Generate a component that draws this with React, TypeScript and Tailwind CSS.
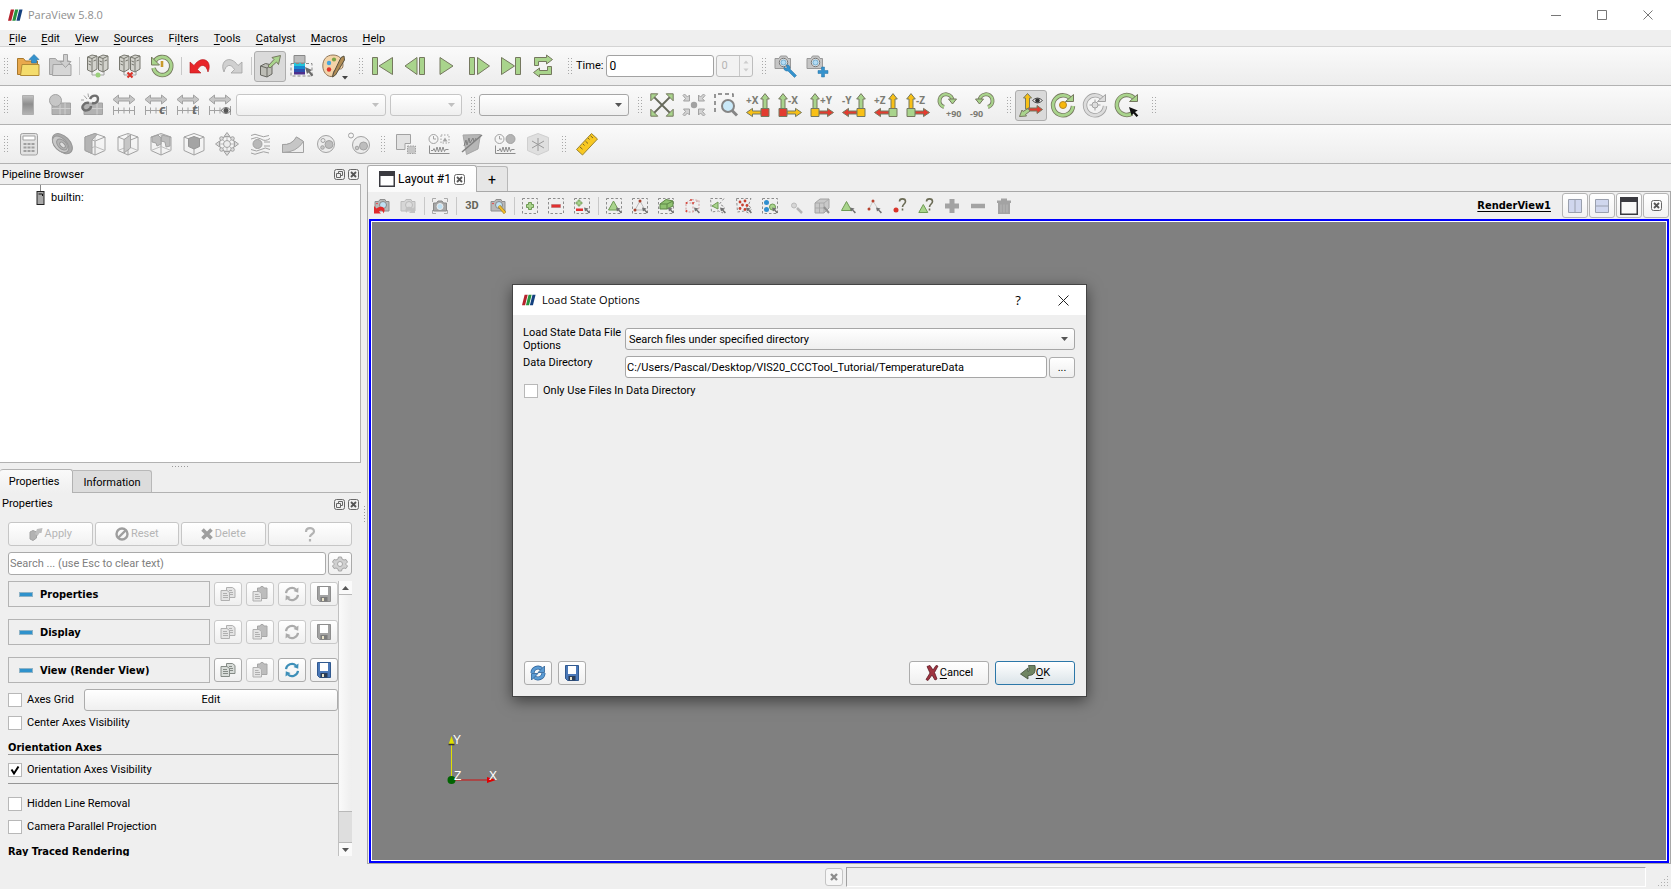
import type { ReactNode } from "react";

const G = "#a9d48c";
const D = "#75785f";
const L = "#c6c6c6";
const M = "#a2a2a2";

type P = { children?: ReactNode };

function Icon({ children }: P) {
  return (
    <svg viewBox="0 0 24 24" className="size-6 shrink-0 overflow-visible" fill="none" strokeLinejoin="round">
      {children}
    </svg>
  );
}

function Small({ children }: P) {
  return (
    <svg viewBox="0 0 16 16" className="size-4 shrink-0" fill="none" strokeLinejoin="round">
      {children}
    </svg>
  );
}

function Grip() {
  const rows = [0, 1, 2, 3, 4, 5];
  return (
    <svg viewBox="0 0 5 17" className="ml-1 mr-[3px] h-[17px] w-[5px] shrink-0" fill="#a8a8a8">
      {rows.map((r) => (
        <g key={r}>
          <rect x="0" y={r * 3} width="1" height="1" />
          <rect x="3" y={r * 3} width="1" height="1" />
        </g>
      ))}
    </svg>
  );
}

function Sep() {
  return (
    <div className="flex w-1.5 shrink-0 justify-center">
      <div className="h-[18px] w-px bg-[#c8c8c8]" />
    </div>
  );
}

function Tool({ label, on, wide, children }: P & { label: string; on?: boolean; wide?: boolean }) {
  return (
    <button
      aria-label={label}
      className={`flex h-[31px] shrink-0 items-center justify-center rounded-[3px] ${wide ? "w-[33px]" : "w-8"} ${
        on ? "border border-[#adadad] bg-[#dadada]" : ""
      }`}
    >
      <Icon>{children}</Icon>
    </button>
  );
}

function ViewTool({ label, children }: P & { label: string }) {
  return (
    <button aria-label={label} className="flex h-6 w-[26px] shrink-0 items-center justify-center">
      <Small>{children}</Small>
    </button>
  );
}

function Bar({ children }: P) {
  return (
    <div className="flex h-[39px] shrink-0 items-center overflow-hidden border-b border-[#b2b2b2] bg-linear-to-b from-[#fafafa] to-[#ededed]">
      {children}
    </div>
  );
}

function Combo({ label, className, disabled, options = [""] }: { label: string; className: string; disabled?: boolean; options?: string[] }) {
  return (
    <div className={`relative h-[22px] ${className}`}>
      <select
        aria-label={label}
        disabled={disabled}
        className={`size-full appearance-none rounded-[3px] border bg-linear-to-b from-white to-[#efefef] pl-[3px] text-[11px] text-black ${
          disabled ? "border-[#c6c6c6]" : "border-[#a6a6a6]"
        }`}
      >
        {options.map((o) => (
          <option key={o}>{o}</option>
        ))}
      </select>
      <svg viewBox="0 0 7 4" className="pointer-events-none absolute right-[7px] top-[9px] h-1 w-[7px]" fill={disabled ? "#c0c0c0" : "#555"}>
        <path d="M0 0h7L3.500 4z" />
      </svg>
    </div>
  );
}

function Check({ label, checked }: { label: string; checked?: boolean }) {
  return (
    <label className="flex items-center gap-[5px]">
      <span className="relative grid size-3.5 shrink-0">
        <input type="checkbox" defaultChecked={checked} className="peer size-3.5 appearance-none border border-[#b8b8b8] bg-white" />
        <svg viewBox="0 0 14 14" className="pointer-events-none absolute inset-0 hidden size-3.5 peer-checked:block" fill="none" stroke="#000" strokeWidth="2">
          <path d="M3.500 6.500 6 10.500 10.500 3.500" />
        </svg>
      </span>
      <span className="whitespace-nowrap">{label}</span>
    </label>
  );
}

function Logo({ className }: { className: string }) {
  return (
    <svg viewBox="0 0 16 12" className={className}>
      <path d="M3 0h3.500L3.500 12H0z" fill="#b5222c" />
      <path d="M7.500 0H11L8 12H4.500z" fill="#27933f" />
      <path d="M12 0h3.500l-3 12H9z" fill="#14417f" />
    </svg>
  );
}

function Axis({ text, right, up, side, box }: { text: string; right?: boolean; up: string; side: string; box: string }) {
  return (
    <>
      <g transform={right ? "translate(24 0) scale(-1 1)" : undefined} stroke={D} strokeWidth="1">
        <path d="M3 15.500V6H.7L5 .6 9.300 6H7v9.500z" fill={up} />
        <path d="M9 18h8.500v-2.600l6 4.100-6 4.100V21H9z" fill={side} />
        <rect x="1" y="15.500" width="8" height="8" fill={box} />
      </g>
      <text x={right ? 0 : 10} y="11" fontSize="10" fontWeight="700" fill="#7c7c74" fontFamily="Noto Sans, sans-serif">
        {text}
      </text>
    </>
  );
}

function Cube({ variant }: { variant: "clip" | "slice" | "thresh" | "extract" }) {
  return (
    <>
      <path d="M2 5 12 1.500 22 5v13.500L12 23 2 18.500zM2 5l10 4 10-4M12 9v14" stroke={M} />
      {variant !== "extract" && <path d="M2 18.500l10-4 10 4M12 1.500v13" stroke="#bdbdbd" />}
      {variant === "clip" && <path d="M2 5 12 1.500l2 1L9 8v13.500L2 18.500z" fill="#b4b4b4" stroke={M} />}
      {variant === "slice" && <path d="M8 7.500 14.500 3v13L8 21z" fill={L} stroke={M} />}
      {variant === "thresh" && <path d="M3 5l6-2 3 3v6l-4 2-1-3-4-1zM13 3l8 2v9l-4 1-1-5-4-1z" fill="#bcbcbc" stroke={M} />}
      {variant === "extract" && <path d="M6.500 6.500 12 4.500l5.500 2v8L12 17l-5.500-2.500z" fill="#a4a4a4" stroke="#959595" />}
    </>
  );
}

function Range({ children }: P) {
  return (
    <>
      <path d="M1 6.500 6.500 2v3h11V2L23 6.500 17.500 11V8h-11v3z" fill={L} stroke={M} />
      <path d="M1.500 13v9M22.500 13v9M1.500 17.500h21M6.500 14.500v6M12 14.500v6M17.500 14.500v6" stroke={M} />
      {children}
    </>
  );
}

function Servers() {
  return (
    <>
      <path d="M6 17v4h4M18 17v4h-4" stroke={M} />
      <path d="M1.500 3 6 1l5 1v13l-5 3-4.500-2z" fill="#d2d2cc" stroke="#77776f" />
      <path d="M6 4.500V18M1.500 3 6 4.500 11 2M2.500 7l2.500 1M2.500 10l2.500 1M7.500 7l2.500-1" stroke="#77776f" />
      <path d="M12.500 3 17 1l5 1v13l-5 3-4.500-2z" fill="#d2d2cc" stroke="#77776f" />
      <path d="M17 4.500V18M12.500 3 17 4.500 22 2M13.500 7l2.500 1M13.500 10l2.500 1M18.500 7l2.500-1" stroke="#77776f" />
    </>
  );
}

function Camera() {
  return (
    <>
      <path d="M1 4.500h4l1.500-2.500h6L14 4.500h2.500v10H1z" fill="#c5c5c5" stroke="#999" />
      <circle cx="9.500" cy="8.500" r="4.200" fill="#eee" stroke="#777" />
      <circle cx="9.500" cy="8.500" r="2.600" fill="#b4dcf4" stroke="#6fa9cc" />
    </>
  );
}

function SmallCamera({ dim }: { dim?: boolean }) {
  return (
    <>
      <path d="M1 3.500h3.500L6 1.500h5l1 2h3v9.500H1z" fill={dim ? "#d6d6d6" : "#b9b9b9"} stroke={dim ? "#bbb" : "#8e8e8e"} />
      <circle cx="9" cy="7" r="3.500" fill={dim ? "#ddd" : "#bfe0f3"} stroke={dim ? "#bbb" : "#888"} />
      {!dim && <circle cx="3" cy="5.500" r=".8" fill="#e33" />}
    </>
  );
}

function Dash() {
  return <path d="M.5.5h15v15H.5z" stroke="#8d8d8d" strokeDasharray="2.500 2" />;
}

function Pointer() {
  return <path d="m10 9.500 1 4 1.200-1 2.600 3 1.200-1.200-2.800-2.600 1.300-1.200z" fill="#707070" />;
}

function Disk({ tone }: { tone: "blue" | "grey" }) {
  const b = tone === "blue";
  return (
    <Small>
      <path d="M1.500.500h13v15h-11l-2-2z" fill={b ? "#4a78b8" : "#a3a3a3"} stroke={b ? "#31598f" : "#8e8e8e"} />
      <rect x="4" y="1" width="8" height="8" fill="#fff" />
      <rect x="4.500" y="11" width="7" height="4.500" fill={b ? "#2b3d57" : "#7c7c7c"} />
      <rect x="6" y="12" width="2" height="3" fill="#e8e2c8" />
    </Small>
  );
}

function Cycle({ color }: { color: string }) {
  return (
    <Small>
      <path d="M2 7.200A6 6 0 0 1 12 3.500M14 8.800A6 6 0 0 1 4 12.500" stroke={color} strokeWidth="2.200" />
      <path d="m14.500 1.500-.3 5.200-4.700-1.700zM1.500 14.500l.3-5.200 4.700 1.700z" fill={color} />
    </Small>
  );
}

function Restore() {
  return (
    <Small>
      <path d="M2.500 8A5.500 5.500 0 0 1 11.500 3.800M13.500 8A5.500 5.500 0 0 1 4.500 12.200" stroke="#2c5f96" strokeWidth="4" />
      <path d="M2.500 8A5.500 5.500 0 0 1 11.500 3.800M13.500 8A5.500 5.500 0 0 1 4.500 12.200" stroke="#5b9bd3" strokeWidth="2.600" />
      <path d="M14.500 1v6.500H8zM1.500 15V8.500H8z" fill="#5b9bd3" stroke="#2c5f96" strokeWidth=".8" />
    </Small>
  );
}

function CopyIcon({ dark }: { dark?: boolean }) {
  return (
    <Small>
      <g fill={dark ? "#d8dcd9" : "#e4e4e4"} stroke={dark ? "#858b86" : "#b0b0b0"}>
        <path d="M6.500 1.500h6l2.500 2v8H6.500z" />
        <path d="M9 4.500h3M9 6.500h4M9 8.500h4" />
        <path d="M1 4.500h6l2.500 2v8H1z" />
        <path d="M3 7.500h4M3 9.500h5M3 11.500h5" />
      </g>
    </Small>
  );
}

function PasteIcon() {
  return (
    <Small>
      <path d="M5.500 2h2.500l1-1.500h2L12 2h3v10.500H5.500z" fill="#bdbdbd" stroke="#a6a6a6" />
      <path d="M1 5.500h6l2.500 2V15H1z" fill="#e4e4e4" stroke="#b0b0b0" />
      <path d="M3 8.500h3.500M3 10.500h5M3 12.500h5" stroke="#b0b0b0" />
    </Small>
  );
}

function IconButton({ label, dim, children }: P & { label: string; dim?: boolean }) {
  return (
    <button
      aria-label={label}
      className={`flex h-6 w-7 shrink-0 items-center justify-center rounded-[3px] border bg-linear-to-b from-white to-[#efefef] ${
        dim ? "border-[#c9c9c9]" : "border-[#acacac]"
      }`}
    >
      {children}
    </button>
  );
}

function Section({ title, active }: { title: string; active?: boolean }) {
  return (
    <div className="mb-3 flex items-center gap-1">
      <button className="flex h-[26px] flex-1 items-center gap-[7px] border border-[#b4b4b4] pl-2.5 pt-px font-['DejaVu_Sans_Condensed','DejaVu_Sans',sans-serif] font-bold">
        <span className="h-[5px] w-3.5 border border-[#8fb3c6] bg-[#2f92cc]" />
        {title}
      </button>
      <IconButton label={`Copy ${title}`} dim={!active}><CopyIcon dark={active} /></IconButton>
      <IconButton label={`Paste ${title}`} dim><PasteIcon /></IconButton>
      <IconButton label={`Reset ${title}`} dim={!active}><Cycle color={active ? "#3d8fb8" : "#ababab"} /></IconButton>
      <IconButton label={`Save ${title}`} dim={!active}><Disk tone={active ? "blue" : "grey"} /></IconButton>
    </div>
  );
}

function DockTitle({ title }: { title: string }) {
  return (
    <div className="flex items-center justify-between pl-0.5 pr-0.5">
      <h2>{title}</h2>
      <div className="flex gap-[3px]">
        <button aria-label={`Float ${title}`}>
          <svg viewBox="0 0 11 11" className="size-[11px]" fill="none" stroke="#666">
            <rect x=".5" y=".5" width="10" height="10" rx="2" />
            <path d="M4.500 4V2.500h4v4H7M2.500 4.500h4v4h-4z" />
          </svg>
        </button>
        <button aria-label={`Close ${title}`}><CloseBox /></button>
      </div>
    </div>
  );
}

function CloseBox() {
  return (
    <svg viewBox="0 0 11 11" className="size-[11px]" fill="none" stroke="#666">
      <rect x=".5" y=".5" width="10" height="10" rx="2" />
      <path d="m3 3 5 5m0-5L3 8" stroke="#555" strokeWidth="1.800" />
    </svg>
  );
}

function WindowGlyph() {
  return (
    <svg viewBox="0 0 16 16" className="size-4">
      <path d="M0 0h16v16H0z" fill="#3a3a40" />
      <path d="M1.500 5h13v9.500h-13z" fill="#fff" />
    </svg>
  );
}

function ActionButton({ text, children }: P & { text?: string }) {
  return (
    <button
      disabled
      aria-label={text ?? "Help"}
      className="flex h-6 flex-1 items-center justify-center gap-0.5 rounded-[3px] border border-[#c6c6c6] bg-linear-to-b from-white to-[#f1f1f1] text-[#b5b5b5]"
    >
      {children}
      {text}
    </button>
  );
}

const menus: [string, string, string][] = [
  ["", "F", "ile"],
  ["", "E", "dit"],
  ["", "V", "iew"],
  ["", "S", "ources"],
  ["Fi", "l", "ters"],
  ["", "T", "ools"],
  ["", "C", "atalyst"],
  ["", "M", "acros"],
  ["", "H", "elp"],
];

function MainToolbars() {
  return (
    <>
      <Bar>
        <Grip />
        <Tool label="Open">
          <path d="M1.500 20.500V4.500h6l2 2.500h12v13.500z" fill="#e9a94c" stroke="#a8782c" />
          <path d="M4.500 21.500 6 10.500h17v11z" fill="#f4dc6c" stroke="#b08a35" />
          <path d="M15.500 7V5.500H13L18 .5l5 5h-2.500V9h-5z" fill="#3492cd" stroke="#2672a5" strokeWidth=".6" />
        </Tool>
        <Tool label="Save data">
          <path d="M1.500 20.500V4.500h6l2 2.500h12v13.500z" fill="#c9c9c9" stroke={M} />
          <path d="M4.500 21.500 5 10.500h18v11z" fill="#d6d6d6" stroke={M} />
          <path d="M15.500.5h4v7H23l-5.500 6-5.500-6h3.500z" fill="#cfcfcf" stroke={M} />
        </Tool>
        <Sep />
        <Tool label="Connect">
          <Servers />
          <circle cx="12" cy="21" r="2.500" fill="#9bd07c" />
        </Tool>
        <Tool label="Disconnect">
          <Servers />
          <path d="m9.500 18.500 5 5m0-5-5 5" stroke="#d8342b" strokeWidth="2.200" />
        </Tool>
        <Tool label="Reload">
          <path d="M4.500 7.500A9 9 0 1 1 3.500 14" stroke={D} strokeWidth="4.500" />
          <path d="M4.500 7.500A9 9 0 1 1 3.500 14" stroke={G} strokeWidth="2.800" />
          <path d="M1.500 3v8h8z" fill={G} stroke={D} />
          <path d="M12 7v6" stroke="#c99a2c" strokeWidth="2.600" />
        </Tool>
        <Sep />
        <Tool label="Undo">
          <path d="M2 8v11h11l-3.500-3.500C13 9.500 18 10 20 18c5-11-6-18-14-6.500z" fill="#e8262a" stroke="#b3181c" strokeWidth=".6" />
        </Tool>
        <Tool label="Redo">
          <path d="M22 8v11H11l3.500-3.500C11 9.500 6 10 4 18-1 7 10 0 18 11.500z" fill="#d0d0d0" stroke={M} strokeWidth=".8" />
        </Tool>
        <Sep />
        <Tool label="Auto apply" on>
          <path d="m2.500 12 5-2.500 6.500 1.500v9l-5 3-6.500-2z" fill="#bdbdb6" stroke="#666660" />
          <path d="m2.500 12 6.500 2 5-3M9 14v9" stroke="#666660" />
          <path d="m10 12 6-6.500L14 3.500l8.500-2-2 9L18.500 8 12 14z" fill={G} stroke={D} />
        </Tool>
        <Tool label="Color map">
          <path d="M4 1.500h11V9H4z" fill="#bcbcbc" stroke="#888" />
          <path d="M4 9h11v3H4z" fill="#25c4d8" />
          <path d="M4 12h11v3H4z" fill="#1988d0" />
          <path d="M4 15h11v3H4z" fill="#2c4fae" />
          <path d="M4 18h11v2.500H4z" fill="#4d2f8c" />
          <path d="M1 9.500h21V22H1z" stroke="#888" strokeDasharray="3 2" />
          <path d="m15 13 2 7 1.600-1.500 3 4 1.700-1.400-3.200-3.800L22 16z" fill="#6a6a6a" />
        </Tool>
        <Tool label="Palette">
          <path d="M11 1C4 1 .8 6 .8 12S5 22.500 9 22.500c3.500 0 1-4.500 4-6.500 4-2 8 1 8-5S17 1 11 1z" fill="#f3d3a8" stroke="#90775a" />
          <circle cx="7" cy="9" r="2.200" fill="#49a6dc" />
          <circle cx="12" cy="5.500" r="2.100" fill="#7aa445" />
          <circle cx="7" cy="15.500" r="2.200" fill="#e0352b" />
          <path d="m19 3.500 3-1.500.5 4-9 15-3 2 1-4z" fill="#b28d55" stroke="#57513f" />
          <path d="M20 22h6l-3 3.500z" fill="#444" />
        </Tool>
        <div className="w-[5px]" />
        <Grip />
        <Tool label="First frame">
          <path d="M1.500 3.500h5v17h-5zM21.500 3.500v17L8 12z" fill={G} stroke={D} />
        </Tool>
        <Tool label="Previous frame">
          <path d="M14 3.500v17L2 12zM16.500 3.500h5v17h-5z" fill={G} stroke={D} />
        </Tool>
        <Tool label="Play">
          <path d="M5 3.500v17L18 12z" fill={G} stroke={D} />
        </Tool>
        <Tool label="Next frame">
          <path d="M10.500 3.500v17L22.500 12zM2.500 3.500h5v17h-5z" fill={G} stroke={D} />
        </Tool>
        <Tool label="Last frame">
          <path d="M2.500 3.500v17L15.500 12zM16.500 3.500h5v17h-5z" fill={G} stroke={D} />
        </Tool>
        <Tool label="Loop">
          <path d="M3.500 11.500v-8h12V1l6 4.500-6 4.500V7.500h-8v4zM20.500 12.500v8h-12V23l-6-4.500 6-4.500v2.500h8v-4z" fill={G} stroke={D} />
        </Tool>
        <div className="w-[5px]" />
        <Grip />
        <label htmlFor="time" className="mr-[3px]">Time:</label>
        <input id="time" defaultValue="0" className="h-[22px] w-[108px] rounded-[3px] border border-[#a2a2a2] bg-white px-0.5 text-[12px]" />
        <div className="ml-0.5 flex h-[22px] w-[37px] items-center rounded-[3px] border border-[#bdbdbd] bg-[#f2f2f2]">
          <input aria-label="Time step" disabled defaultValue="0" className="w-[22px] px-1 text-[#b5b5b5]" />
          <svg viewBox="0 0 14 20" className="h-5 w-3.5 border-l border-[#c8c8c8]" fill="#cdcdcd">
            <path d="m4 7 3-3.500L10 7zM4 13h6l-3 3.500z" />
          </svg>
        </div>
        <div className="w-[5px]" />
        <Grip />
        <Tool label="Camera settings">
          <Camera />
          <path d="m12 11 2.500 0 1.500 2 0 2 6.500 6.500-2 2-6.500-6.500-2 0-2-1.500 0-2.500 2 1.500 1-1z" fill="#3492cd" stroke="#2672a5" strokeWidth=".5" />
        </Tool>
        <Tool label="Add camera link">
          <Camera />
          <path d="M15.500 13h3v3.500H22v3h-3.500V23h-3v-3.500H12v-3h3.500z" fill="#3492cd" stroke="#2672a5" strokeWidth=".5" />
        </Tool>
      </Bar>

      <Bar>
        <Grip />
        <Tool label="Scalar bar">
          <defs>
            <linearGradient id="bar" x1="0" y1="0" x2="0" y2="1">
              <stop offset="0" stopColor="#c4c4c4" />
              <stop offset=".45" stopColor="#8e8e8e" />
              <stop offset="1" stopColor="#b4b4b4" />
            </linearGradient>
          </defs>
          <rect x="6.500" y="2.500" width="11" height="19" fill="url(#bar)" stroke="#b0b0b0" />
        </Tool>
        <Tool label="Edit color map">
          <path d="M4 10h18.500v11.500H4z" fill="#b2b2b2" stroke={M} />
          <path d="M12 10v11.500M4 15.500h18.500M17 10v11.500" stroke="#cfcfcf" />
          <circle cx="7.500" cy="7.500" r="6" fill={L} stroke={M} />
        </Tool>
        <Tool label="Separate color map">
          <path d="M4 10h18.500v11.500H4z" fill="#b2b2b2" stroke={M} />
          <path d="M12 15.500h10.500M17 10v11.500" stroke="#cfcfcf" />
          <path d="M10 6c2-4.500 8-4.500 8 0 0 3-3 5-6 4M9 10c-4-1-8 3-6 6s8 1 8-3" stroke="#6e6e6e" strokeWidth="2.400" />
          <path d="M4 2.500 7 6M8 .5 8.500 4M1 7h3" stroke={M} />
        </Tool>
        <Tool label="Rescale to data range"><Range /></Tool>
        <Tool label="Rescale to custom range">
          <Range><text x="15" y="21" fontSize="13" fontWeight="700" fontStyle="italic" fill="#6c6c6c" fontFamily="Noto Sans, sans-serif">c</text></Range>
        </Tool>
        <Tool label="Rescale over time">
          <Range><text x="16" y="21" fontSize="13" fontWeight="700" fontStyle="italic" fill="#6c6c6c" fontFamily="Noto Sans, sans-serif">t</text></Range>
        </Tool>
        <Tool label="Rescale to visible range">
          <Range>
            <path d="M13 17.500q5-6 10 0-5 6-10 0z" fill="#ececec" stroke="#6c6c6c" />
            <circle cx="18" cy="17.500" r="2.500" fill="#555" />
          </Range>
        </Tool>
        <Combo label="Color by" className="w-[150px] shrink-0" disabled />
        <Combo label="Component" className="ml-1 w-[72px] shrink-0" disabled />
        <div className="w-[5px]" />
        <Grip />
        <Combo label="Representation" className="w-[150px] shrink-0" />
        <div className="w-[5px]" />
        <Grip />
        <Tool label="Reset camera">
          <path d="m4 4 16 16M20 4 4 20" stroke="#66695a" strokeWidth="1.800" />
          <path d="M.8.800h7l-7 7zM23.200.800v7l-7-7zM.8 23.200v-7l7 7zM23.200 23.200h-7l7-7z" fill={G} stroke={D} />
        </Tool>
        <Tool label="Zoom to data">
          <circle cx="12" cy="12" r="3.200" fill="#a2a2a2" />
          <g fill="#d2d2d2" stroke={M}>
            <path d="m1 2.500 1.500-1.500 3 3L7.500 2v6h-6L3.500 5.500z" />
            <path d="M23 2.500 21.500 1l-3 3L16.500 2v6h6L20.500 5.500z" />
            <path d="m1 21.500 1.500 1.500 3-3L7.500 22v-6h-6L3.500 18.500z" />
            <path d="M23 21.500 21.500 23l-3-3L16.500 22v-6h6L20.500 18.500z" />
          </g>
        </Tool>
        <Tool label="Zoom to box">
          <path d="M1 19V1h18v4" stroke="#777" strokeWidth="1.500" strokeDasharray="4 3" />
          <path d="m17.500 17 5.500 5.500" stroke="#858585" strokeWidth="3" />
          <circle cx="14" cy="13" r="6" fill="#c9e9f9" stroke="#858585" strokeWidth="2" />
        </Tool>
        <Tool label="+X"><Axis text="+X" right up={G} side="#f8c016" box="#e23c30" /></Tool>
        <Tool label="-X"><Axis text="-X" up={G} side="#f8c016" box="#e23c30" /></Tool>
        <Tool label="+Y"><Axis text="+Y" up={G} side="#e23c30" box="#f8c016" /></Tool>
        <Tool label="-Y"><Axis text="-Y" right up={G} side="#e23c30" box="#f8c016" /></Tool>
        <Tool label="+Z"><Axis text="+Z" right up="#f8c016" side="#e23c30" box={G} /></Tool>
        <Tool label="-Z"><Axis text="-Z" up="#f8c016" side="#e23c30" box={G} /></Tool>
        <Tool label="Rotate +90">
          <path d="M6 14A6.500 6.500 0 1 1 14.500 8" stroke={D} strokeWidth="4" />
          <path d="M6 14A6.500 6.500 0 1 1 14.500 8" stroke={G} strokeWidth="2.400" />
          <path d="M10.500 6h8l-4 5z" fill={G} stroke={D} />
          <text x="8" y="24" fontSize="9" fontWeight="700" fill="#7c7c74" fontFamily="Noto Sans, sans-serif">+90</text>
        </Tool>
        <Tool label="Rotate -90">
          <path d="M18 14A6.500 6.500 0 1 0 9.500 8" stroke={D} strokeWidth="4" />
          <path d="M18 14A6.500 6.500 0 1 0 9.500 8" stroke={G} strokeWidth="2.400" />
          <path d="M13.500 6h-8l4 5z" fill={G} stroke={D} />
          <text x="0" y="24" fontSize="9" fontWeight="700" fill="#7c7c74" fontFamily="Noto Sans, sans-serif">-90</text>
        </Tool>
        <div className="w-[5px]" />
        <Grip />
        <Tool label="Show orientation axes" on>
          <path d="M6.500 16V5H4.500L8.500.500l4 4.500h-2v11z" fill="#f8c016" stroke={D} />
          <path d="M9 15h9v-2.500l5.500 4-5.500 4V18H9z" fill="#e23c30" stroke={D} />
          <path d="m9 15.500-5 3-1-1.500L.5 23.500l7-.5-1-1.500 4.500-3.500z" fill={G} stroke={D} />
          <path d="M13.500 7.500q5-5 10 0-5 5-10 0z" fill="#eee" stroke="#555" />
          <circle cx="18.500" cy="7.500" r="2.300" fill="#333" />
        </Tool>
        <Tool label="Reset center">
          <path d="M20.500 7A10 10 0 1 0 22 13" stroke={D} strokeWidth="4.400" />
          <path d="M20.500 7A10 10 0 1 0 22 13" stroke={G} strokeWidth="2.800" />
          <path d="M14.500 8.500h8v-7z" fill={G} stroke={D} />
          <circle cx="12" cy="12" r="3.500" fill="#f8b80c" stroke="#b3882a" />
        </Tool>
        <Tool label="Pick center">
          <path d="M20.500 7A10 10 0 1 0 22 13" stroke={M} strokeWidth="4.400" />
          <path d="M20.500 7A10 10 0 1 0 22 13" stroke="#dcdcdc" strokeWidth="2.800" />
          <path d="M14.500 8.500h8v-7z" fill="#dcdcdc" stroke={M} />
          <path d="M12 6.500v11M6.500 12h11" stroke={M} />
          <circle cx="12" cy="12" r="3" fill="#ddd" stroke={M} />
        </Tool>
        <Tool label="Reset rotation">
          <path d="M20.500 7A10 10 0 1 0 17 20.500" stroke={D} strokeWidth="4.400" />
          <path d="M20.500 7A10 10 0 1 0 17 20.500" stroke={G} strokeWidth="2.800" />
          <path d="M14.500 8.500h8v-7z" fill={G} stroke={D} />
          <path d="m14 14 2.500 8.500 2-2 3 3.500 1.800-1.500-3.300-3.500 2.800-1.500z" fill="#111" />
        </Tool>
        <div className="w-[5px]" />
        <Grip />
      </Bar>

      <Bar>
        <Grip />
        <Tool label="Calculator" wide>
          <rect x="3.500" y="1.500" width="17" height="21.500" rx="2" fill="#e2e2e2" stroke={M} />
          <rect x="6" y="4" width="12" height="4" fill="#fff" stroke={M} />
          <path d="M6.500 12h3M10.500 12h3M14.500 12h3M6.500 15.500h3M10.500 15.500h3M14.500 15.500h3M6.500 19h3M10.500 19h3M14.500 19h3" stroke="#a0a0a0" strokeWidth="2.200" />
        </Tool>
        <Tool label="Contour" wide>
          <g stroke="#979797">
            <ellipse cx="12" cy="11.500" rx="12" ry="7.500" transform="rotate(45 12 12)" fill="#a9a9a9" />
            <ellipse cx="11" cy="12.500" rx="10" ry="6" transform="rotate(45 11 12)" fill="#c9c9c9" />
            <ellipse cx="12" cy="12.500" rx="6.500" ry="4" transform="rotate(45 12 12.500)" fill="#b5b5b5" />
            <ellipse cx="12.500" cy="13" rx="3.500" ry="2" transform="rotate(45 12.500 13)" fill="#ddd" />
          </g>
        </Tool>
        <Tool label="Clip" wide><Cube variant="clip" /></Tool>
        <Tool label="Slice" wide><Cube variant="slice" /></Tool>
        <Tool label="Threshold" wide><Cube variant="thresh" /></Tool>
        <Tool label="Extract subset" wide><Cube variant="extract" /></Tool>
        <Tool label="Glyph" wide>
          <circle cx="12" cy="12" r="7.500" stroke={M} />
          <path d="M12 4.500v15M4.500 12h15M6.500 6.500l11 11M17.500 6.500l-11 11" stroke={M} strokeWidth=".7" />
          <g fill="#dadada" stroke={M}>
            <path d="M9 4.500 12 .5l3 4zM9 19.500l3 4 3-4zM4.500 9l-4 3 4 3zM19.500 9l4 3-4 3z" />
            <circle cx="12" cy="12" r="3.500" fill="#ececec" />
            <circle cx="6.500" cy="6.500" r="1.800" /><circle cx="17.500" cy="6.500" r="1.800" />
            <circle cx="6.500" cy="17.500" r="1.800" /><circle cx="17.500" cy="17.500" r="1.800" />
          </g>
        </Tool>
        <Tool label="Stream tracer" wide>
          <path d="M3 3.500q4-2.500 8 0t10 0M3 7q6-3 10 0t9-.5M16 10h6M16 14h6M3 17.500q6 3 10 0t9 0M3 21q4 2.500 8 0t10 0" stroke={M} />
          <circle cx="9.500" cy="12" r="4.500" fill="#b8b8b8" stroke={M} />
        </Tool>
        <Tool label="Warp" wide>
          <path d="M1.500 12.500q9 1 14-7.500l7 4.500v11h-21z" fill="#ededed" stroke={M} />
          <path d="M1.500 12.500q9 1 14-7.500l7 4.500q-7 11-21 11z" fill={L} stroke={M} />
        </Tool>
        <Tool label="Group datasets" wide>
          <circle cx="12" cy="12" r="8.500" fill="#ececec" stroke={M} />
          <circle cx="15" cy="12.500" r="4" fill="#bdbdbd" stroke={M} />
          <circle cx="9" cy="8.500" r="2" stroke={M} /><circle cx="8.500" cy="15.500" r="1.800" fill={L} stroke={M} />
        </Tool>
        <Tool label="Extract level" wide>
          <circle cx="14" cy="13" r="8.500" fill="#ececec" stroke={M} />
          <circle cx="16.500" cy="14" r="4" fill="#bdbdbd" stroke={M} />
          <circle cx="4" cy="3.500" r="2.500" stroke={M} /><circle cx="10" cy="16" r="1.800" fill={L} stroke={M} />
        </Tool>
        <div className="w-0.5" />
        <Grip />
        <Tool label="Extract block" wide>
          <path d="M2.500 2.500h14v9H11v6H2.500z" fill="#e2e2e2" stroke={M} />
          <rect x="13.500" y="14" width="8" height="7.500" fill={L} stroke={M} strokeDasharray="1.500 1" />
        </Tool>
        <Tool label="Plot over time" wide>
          <circle cx="6.500" cy="7" r="4.500" stroke={M} /><path d="M6.500 4v3H9" stroke={M} />
          <path d="M14 3h8v8h-8z" stroke={M} strokeDasharray="1.500 1.500" /><path d="m15.500 9.500 2.500-4 2.500 4z" fill={M} />
          <path d="M2.500 13.500v8h20M4 18.500h2l1-2 1.500 3.500L10 15l1.500 5 1.500-5 1.500 5 1.500-5 1.500 4.500 1-2h3" stroke="#8d8d8d" />
        </Tool>
        <Tool label="Plot over line" wide>
          <path d="m3 3 17.500-.5L18 17 6.500 22.500z" fill="#b6b6b6" stroke="#a6a6a6" />
          <path d="M2 20 22 3" stroke="#808080" strokeWidth="1.500" />
          <path d="m4 14 2-6 1 5 2-7 1 5 3-5 1 4 2-4" stroke="#808080" />
        </Tool>
        <Tool label="Plot selection" wide>
          <circle cx="6.500" cy="7" r="4.500" stroke={M} /><path d="M6.500 4v3H9" stroke={M} />
          <circle cx="17.500" cy="7" r="4.500" fill="#b4b4b4" stroke={M} />
          <path d="M2.500 13.500v8h20M4 18.500h2l1-2 1.500 3.500L10 15l1.500 5 1.500-5 1.500 5 1.500-5 1.500 4.500 1-2h3" stroke="#8d8d8d" />
        </Tool>
        <Tool label="Probe" wide>
          <path d="M1.500 5.500 12 1.500l10.500 4v13L12 23 1.500 18.500z" fill="#dfdfdf" stroke="#cfcfcf" />
          <path d="M12 6v13M6 9l12 7M18 9 6 16" stroke="#9a9a9a" />
        </Tool>
        <div className="w-1" />
        <Grip />
        <Tool label="Ruler" wide>
          <path d="M1.500 17.500 16.500 1.500l6 5.500-15 16z" fill="#f8c822" stroke="#9c8430" />
          <path d="m5 15 2.500 2.200M8 12l1.500 1.500M10.500 9.200l2.500 2.300M13 6l1.500 1.500M15.500 3.800 18 6" stroke="#7a6626" />
        </Tool>
      </Bar>
    </>
  );
}

function ViewToolbar() {
  return (
    <div className="flex h-[27px] items-center bg-[#efefef] pl-px">
      <ViewTool label="Undo camera">
        <SmallCamera />
        <path d="M0 8v7.500h7L5 13.500c2-2 4-1 4.500 2C13 9.500 7 6.500 2.500 10.500z" fill="#e12a2c" />
      </ViewTool>
      <ViewTool label="Redo camera">
        <SmallCamera dim />
        <path d="M15 8v7h-6l2-2c-2-2-4-1-4.500 2C3 9.500 9 6.500 13 10.500z" fill="#c2c2c2" />
      </ViewTool>
      <Sep />
      <ViewTool label="Capture screenshot">
        <path d="M.5 4V.5H4M12 .5h3.500V4M15.500 12v3.500H12M4 15.500H.5V12" stroke="#aaa" />
        <path d="M1.500 5h3L6 3h4l1.500 2h3v8h-13z" fill="#a7a7a7" stroke="#888" />
        <circle cx="8" cy="8.500" r="3" fill="#bfe0f3" stroke="#eee" />
      </ViewTool>
      <Sep />
      <button className="w-[26px] text-[11px] font-bold text-[#66665a]">3D</button>
      <ViewTool label="Adjust camera">
        <SmallCamera />
        <path d="m9 8 6 7" stroke="#8a6e22" strokeWidth="3" />
        <path d="m9 8 6 7" stroke="#eebc30" strokeWidth="2" />
      </ViewTool>
      <Sep />
      <ViewTool label="Add selection"><Dash /><path d="M6.500 4.500h3v2h2v3h-2v2h-3v-2h-2v-3h2z" fill={G} stroke="#6f9a55" /></ViewTool>
      <ViewTool label="Subtract selection"><Dash /><path d="M3.500 6.500h9v3h-9z" fill="#e23030" stroke="#a66" strokeWidth=".5" /></ViewTool>
      <ViewTool label="Toggle selection">
        <Dash /><path d="M4 2h2v2h2v2H6v2H4V6H2V4h2z" fill={G} stroke="#6f9a55" strokeWidth=".7" /><path d="M2 10.500h7V13H2z" fill="#e23030" /><Pointer />
      </ViewTool>
      <Sep />
      <ViewTool label="Select cells on"><Dash /><path d="m2.500 12 5-9 5 9z" fill={G} stroke="#6f9a55" /><Pointer /></ViewTool>
      <ViewTool label="Select points on">
        <Dash /><path d="m3 12 5-9 5 9z" stroke="#bbb" /><g fill="#a8432f"><circle cx="8" cy="3" r="1.500" /><circle cx="3" cy="12" r="1.500" /></g><Pointer />
      </ViewTool>
      <ViewTool label="Select cells through"><Dash /><path d="m2 6 6-4.500 7 1.500v5L9 11H2z" fill="#8fc270" stroke="#5d8746" /><path d="M2 6h7l6-3M9 6v5" stroke="#5d8746" /><Pointer /></ViewTool>
      <ViewTool label="Select points through">
        <path d="m2 5 5-3.500 8 1v8L9 14H2zM2 5h7l6-2.500M9 5v9" stroke="#cc9a9a" strokeDasharray="2 1.500" />
        <g fill="#d8453a"><circle cx="2.500" cy="5" r="1" /><circle cx="9" cy="5" r="1" /><circle cx="2.500" cy="13" r="1" /><circle cx="7" cy="2" r="1" /></g><Pointer />
      </ViewTool>
      <ViewTool label="Polygon cells"><path d="M.5.5H14L9.500 6l5 3-2 6-4-2-7 1z" stroke="#8d8d8d" strokeDasharray="2.500 2" /><path d="m2 8 6-4v7z" fill={G} stroke="#6f9a55" /><Pointer /></ViewTool>
      <ViewTool label="Polygon points">
        <path d="M.5.5H15L12.500 7l3 4-3 4-4-2-7 1z" stroke="#8d8d8d" strokeDasharray="2.500 2" />
        <g fill="#c8402f"><circle cx="4" cy="4" r="1.400" /><circle cx="9" cy="3" r="1.400" /><circle cx="6.500" cy="7" r="1.400" /><circle cx="11" cy="7.500" r="1.400" /><circle cx="4" cy="10.500" r="1.400" /><circle cx="9" cy="11.500" r="1.400" /></g><Pointer />
      </ViewTool>
      <ViewTool label="Select block"><Dash /><circle cx="4.500" cy="4.500" r="2.500" fill="#2f8fd0" /><circle cx="4.500" cy="11.500" r="2.500" fill="#2f8fd0" /><circle cx="10.500" cy="9" r="3" fill={G} stroke="#6f9a55" /><Pointer /></ViewTool>
      <ViewTool label="Interactive block"><circle cx="6" cy="7.500" r="2.500" fill="#d6d6d6" stroke="#bbb" /><path d="m9 10 5 5" stroke="#b5b5b5" strokeWidth="2.500" /></ViewTool>
      <ViewTool label="Interactive cells"><path d="m1 5 5-4h9v9l-5 5H1z" fill="#c9c9c9" stroke="#a4a4a4" /><path d="M1 5h9l5-4M10 5v10M5.500 5v10M1 10h9" stroke="#a4a4a4" strokeWidth=".8" /><path d="m10 9 5 6" stroke="#909090" strokeWidth="2" /></ViewTool>
      <ViewTool label="Hover cells"><path d="m1.500 12.500 5-9 5 9z" fill={G} stroke="#6f9a55" /><Pointer /></ViewTool>
      <ViewTool label="Interactive points"><path d="m3 11 4-8 5 8" stroke="#ccc" /><g fill="#b8432f"><circle cx="7" cy="3" r="1.500" /><circle cx="3" cy="11" r="1.500" /></g><Pointer /></ViewTool>
      <ViewTool label="Hover point">
        <circle cx="4" cy="12" r="2.500" fill="#d8352b" />
        <path d="M7.500 3.500c0-3.500 6-3.500 6 0 0 2.500-3 2.500-3 5.500M10.500 10.500v2" stroke="#6b6b55" strokeWidth="1.600" />
      </ViewTool>
      <ViewTool label="Hover cell">
        <path d="m.8 14.500 4.500-8 4.500 8z" fill={G} stroke="#6f9a55" />
        <path d="M8.500 3.500c0-3.500 6-3.500 6 0 0 2.500-3 2.500-3 5.500M11.500 10.500v2" stroke="#6b6b55" strokeWidth="1.600" />
      </ViewTool>
      <ViewTool label="Grow selection"><path d="M8 1v14M1 8h14" stroke="#a3a3a3" strokeWidth="5" /></ViewTool>
      <ViewTool label="Shrink selection"><path d="M1 8h14" stroke="#a3a3a3" strokeWidth="4.500" /></ViewTool>
      <ViewTool label="Clear selection">
        <path d="M1 2.500h14V5H1zM2 5h12v11H2zM5 .5h6v2H5z" fill="#a3a3a3" /><path d="M5 6.500v8M8 6.500v8M11 6.500v8" stroke="#b8b8b8" />
      </ViewTool>
      <div className="flex-1" />
      <a href="#view" className="mr-[11px] font-['DejaVu_Sans_Condensed','DejaVu_Sans',sans-serif] font-bold underline underline-offset-2">RenderView1</a>
      <div className="flex gap-px">
        {["Split horizontal", "Split vertical", "Maximize", "Close view"].map((n, i) => (
          <button key={n} aria-label={n} className="flex h-[25px] w-[26px] items-center justify-center rounded-[3px] border border-[#b4b4b4] bg-linear-to-b from-white to-[#f2f2f2]">
            {i === 0 && <Small><path d="M1.500 1.500h13v13h-13zM8 1.500v13" fill="#d0d7ee" stroke="#9aa0ae" /></Small>}
            {i === 1 && <Small><path d="M1.500 1.500h13v13h-13zM1.500 8h13" fill="#d0d7ee" stroke="#9aa0ae" /></Small>}
            {i === 2 && <svg viewBox="0 0 18 18" className="size-[18px]"><path d="M0 0h18v18H0z" fill="#3a3a40" /><path d="M1.500 5h15v11.500h-15z" fill="#f8f8f8" /></svg>}
            {i === 3 && <CloseBox />}
          </button>
        ))}
      </div>
    </div>
  );
}

function LeftDock() {
  return (
    <div className="flex w-[361px] shrink-0 flex-col">
      <div className="flex h-5 shrink-0 flex-col justify-center pt-px"><DockTitle title="Pipeline Browser" /></div>
      <div className="h-[279px] shrink-0 border-y border-r border-[#b2b2b2] bg-white">
        <div className="flex items-start gap-1.5 pl-9">
          <svg viewBox="0 0 9 20" className="h-5 w-[9px]">
            <path d="M4.500 0v6" stroke="#888" />
            <rect x="1" y="6.500" width="7" height="13" fill="#a8a8a8" stroke="#222" />
            <path d="M2.500 9h4v2" fill="none" stroke="#111" />
          </svg>
          <span className="pt-1.5">builtin:</span>
        </div>
      </div>
      <div className="flex h-1.5 shrink-0 items-center justify-center">
        <svg viewBox="0 0 17 1" className="h-px w-[17px]" stroke="#999" strokeDasharray="1 2"><path d="M0 .5h17" /></svg>
      </div>
      <div className="flex h-6 shrink-0 items-end border-b border-[#b2b2b2]">
        <button className="-mb-px h-6 w-[73px] rounded-t-[3px] border-r border-t border-[#b2b2b2] bg-linear-to-b from-[#fafafa] to-[#efefef] pr-1">Properties</button>
        <button className="h-[22px] w-[79px] rounded-tr-[3px] border-r border-t border-[#b8b8b8] bg-[#dcdcdc] pt-0.5">Information</button>
      </div>
      <div className="flex h-[29px] shrink-0 flex-col pt-1"><DockTitle title="Properties" /></div>
      <div className="flex gap-0.5 pl-2 pr-[9px]">
        <ActionButton text="Apply">
          <svg viewBox="0 0 14 14" className="size-3.5"><path d="m1 5 3-1.500L7.500 5v6L4 13.500 1 12z" fill="#b2b2b2" stroke="#a2a2a2" /><path d="m6 7 2-5 5.500-1-1 5-2 0-2 3z" fill="#bebebe" /></svg>
        </ActionButton>
        <ActionButton text="Reset">
          <svg viewBox="0 0 14 14" className="size-3.5" fill="none" stroke="#9e9e9e" strokeWidth="2.400"><circle cx="7" cy="7" r="5.500" /><path d="m3 11 8-8" /></svg>
        </ActionButton>
        <ActionButton text="Delete">
          <svg viewBox="0 0 12 12" className="size-3" stroke="#9e9e9e" strokeWidth="3.600"><path d="m1.500 1.500 9 9m0-9-9 9" /></svg>
        </ActionButton>
        <ActionButton>
          <svg viewBox="0 0 12 15" className="h-[15px] w-3" fill="none" stroke="#b3b3b3" strokeWidth="2.200"><path d="M2 5c0-5 8-5 8-.5C10 7 6 7 6 10M6 12v2.500" /></svg>
        </ActionButton>
      </div>
      <div className="mt-1.5 flex gap-0.5 pl-2 pr-[9px]">
        <input aria-label="Search" placeholder="Search ... (use Esc to clear text)" className="h-[23px] min-w-0 flex-1 rounded-[3px] border border-[#aaa] bg-white px-px placeholder:text-[#808080]" />
        <button aria-label="Advanced" className="flex h-[23px] w-6 items-center justify-center rounded-[3px] border border-[#aaa] bg-linear-to-b from-white to-[#efefef]">
          <svg viewBox="0 0 16 16" className="size-4" fill="#d0d0d0" stroke="#a6a6a6">
            <path d="M6.500 1h3l.5 2 2 1 2-.5 1.500 2.500L14 7.500v1l1.500 1.500-1.500 2.500-2-.5-2 1-.5 2h-3L6 13l-2-1-2 .5L.5 10 2 8.500v-1L.5 6 2 3.500 4 4l2-1z" />
            <circle cx="8" cy="8" r="2.500" fill="#f2f2f2" />
          </svg>
        </button>
      </div>
      <div className="mt-1.5 flex h-[275px] shrink-0 overflow-hidden pl-2 pr-[9px]">
        <div className="min-w-0 flex-1">
          <Section title="Properties" />
          <Section title="Display" />
          <Section title="View (Render View)" active />
          <div className="-mt-1.5 flex items-center gap-2.5">
            <Check label="Axes Grid" />
            <button className="h-[22px] flex-1 rounded-[3px] border border-[#acacac] bg-linear-to-b from-white to-[#efefef]">Edit</button>
          </div>
          <div className="mt-[5px]"><Check label="Center Axes Visibility" /></div>
          <h3 className="mt-[11px] border-b border-[#969696] font-['DejaVu_Sans_Condensed','DejaVu_Sans',sans-serif] font-bold leading-[13px]">Orientation Axes</h3>
          <div className="mt-2 border-b border-[#969696] pb-1.5"><Check label="Orientation Axes Visibility" checked /></div>
          <div className="mt-[13px]"><Check label="Hidden Line Removal" /></div>
          <div className="mt-[9px]"><Check label="Camera Parallel Projection" /></div>
          <h3 className="mt-[11px] font-['DejaVu_Sans_Condensed','DejaVu_Sans',sans-serif] font-bold leading-[13px]">Ray Traced Rendering</h3>
        </div>
        <div className="flex w-3.5 flex-col border-l border-[#c0c0c0] bg-[#dedede]">
          <button aria-label="Scroll up" className="flex h-3.5 items-center justify-center border-b border-[#b8b8b8] bg-[#fafafa]">
            <svg viewBox="0 0 7 4" className="h-1 w-[7px]" fill="#555"><path d="M0 4h7L3.500 0z" /></svg>
          </button>
          <div className="flex-1 border-b border-[#b8b8b8] bg-linear-to-r from-[#fafafa] to-[#eee]" />
          <div className="h-[30px]" />
          <button aria-label="Scroll down" className="flex h-3.5 items-center justify-center border-t border-[#b8b8b8] bg-[#fafafa]">
            <svg viewBox="0 0 7 4" className="h-1 w-[7px]" fill="#555"><path d="M0 0h7L3.500 4z" /></svg>
          </button>
        </div>
      </div>
    </div>
  );
}

function RenderArea() {
  return (
    <div className="flex min-w-0 flex-1 flex-col">
      <div className="flex h-7 shrink-0 items-end border-b border-[#a8a8a8]">
        <div className="-mb-px flex h-[27px] w-[110px] items-center gap-[3px] rounded-t-[3px] border border-b-0 border-[#acacac] bg-linear-to-b from-white to-[#fafafa] pl-[11px]">
          <WindowGlyph />
          <span className="whitespace-nowrap text-[12px]">Layout #1</span>
          <button aria-label="Close layout"><CloseBox /></button>
        </div>
        <button aria-label="New layout" className="h-[25px] w-[31px] rounded-tr-[3px] border-r border-t border-[#b8b8b8] bg-[#e6e6e6] pt-0.5 text-[14px]">+</button>
      </div>
      <div className="flex min-h-0 flex-1 flex-col border-x border-b border-[#a8a8a8] pr-px">
        <ViewToolbar />
        <div id="view" className="relative ml-px flex-1 border-2 border-[#0000ff] bg-[#808080] outline outline-1 -outline-offset-3 outline-white">
          <svg viewBox="0 0 60 60" className="absolute bottom-[71px] left-[71px] size-[60px]" fontFamily="Liberation Sans, sans-serif" fontSize="12">
            <path d="M9.500 50V14" stroke="#e0e000" />
            <path d="M6.500 14.500 9.500 6l3 8.500z" fill="#e0e000" />
            <path d="M6.500 14.500h6" stroke="#333" strokeWidth="1.500" />
            <path d="M10 50h36" stroke="#d01010" />
            <path d="M45 47v6l9-3z" fill="#e00000" />
            <circle cx="9.500" cy="50" r="4" fill="#006400" />
            <g fill="#fff">
              <text x="11" y="14">Y</text>
              <text x="12" y="50">Z</text>
              <text x="47" y="50">X</text>
            </g>
          </svg>
        </div>
      </div>
    </div>
  );
}

function Dialog() {
  return (
    <div role="dialog" aria-label="Load State Options" className="absolute left-[512px] top-[284px] flex h-[413px] w-[575px] flex-col border border-[#444] bg-[#efefef] shadow-[0_4px_14px_rgba(0,0,0,0.5)]">
      <div className="flex h-[30px] items-center bg-white pl-[9px] font-['Open_Sans','Noto_Sans',sans-serif]">
        <Logo className="h-3 w-3.5" />
        <span className="ml-1.5 flex-1">Load State Options</span>
        <button aria-label="Help" className="w-11 text-[13px]">?</button>
        <button aria-label="Close" className="flex w-[46px] justify-center">
          <svg viewBox="0 0 11 11" className="size-[11px]" stroke="#222"><path d="m.5.500 10 10m0-10-10 10" /></svg>
        </button>
      </div>
      <div className="grid grid-cols-[100px_1fr] gap-x-0.5 gap-y-1.5 pl-2.5 pr-[11px] pt-[13px] leading-[13px]">
        <span className="-my-0.5">Load State Data File Options</span>
        <Combo label="Load State Data File Options" className="" options={["Search files under specified directory"]} />
        <label htmlFor="dir">Data Directory</label>
        <div className="flex items-center gap-0.5">
          <input id="dir" defaultValue="C:/Users/Pascal/Desktop/VIS20_CCCTool_Tutorial/TemperatureData" className="h-[22px] min-w-0 flex-1 rounded-[3px] border border-[#a6a6a6] bg-white px-px" />
          <button aria-label="Browse" className="h-[21px] w-[26px] rounded-[3px] border border-[#acacac] bg-linear-to-b from-white to-[#efefef]">...</button>
        </div>
      </div>
      <div className="pl-[11px] pt-1.5"><Check label="Only Use Files In Data Directory" /></div>
      <div className="flex-1" />
      <div className="flex gap-1.5 pb-[11px] pl-[11px] pr-[11px]">
        <IconButton label="Restore defaults"><Restore /></IconButton>
        <IconButton label="Save defaults"><Disk tone="blue" /></IconButton>
        <div className="flex-1" />
        <button className="flex h-6 w-20 items-center justify-center gap-px rounded-[3px] border border-[#acacac] bg-linear-to-b from-white to-[#efefef]">
          <svg viewBox="0 0 14 16" className="h-4 w-3.5"><path d="M2 1.500 5 .5l3 4.500 3-4.500 2 .5-3.500 6.500L12 14l-2 1-3-5-4 5.500-2-1L5 8z" fill="#a03440" stroke="#5e1b26" strokeWidth=".8" /></svg>
          <span><u className="underline-offset-2">C</u>ancel</span>
        </button>
        <button className="flex h-6 w-20 items-center justify-center rounded-[3px] border border-[#2c77a8] bg-linear-to-b from-white to-[#dbe4e9]">
          <svg viewBox="0 0 16 16" className="size-4"><path d="M8.500.5H15c1 7-1 10-7 10v3.500L.5 9 8 3v3.500c1.500 0 1-3 .5-6z" fill="#6f8562" stroke="#3f4d38" strokeWidth=".8" /></svg>
          <span><u className="underline-offset-2">O</u>K</span>
        </button>
      </div>
    </div>
  );
}

export default function App() {
  return (
    <div className="relative flex h-screen flex-col overflow-hidden bg-[#efefef] font-[Roboto,'Liberation_Sans',sans-serif] text-[11px] leading-[14px] text-black">
      <header className="flex h-[30px] shrink-0 items-center bg-white pl-2 font-['Open_Sans','Noto_Sans',sans-serif] text-[#8f8f8f]">
        <Logo className="h-3 w-[15px]" />
        <span className="ml-[5px] flex-1">ParaView 5.8.0</span>
        {["M0 5.500h10", "M.5.500h9v9h-9z", "m.5.500 9 9m0-9-9 9"].map((d, i) => (
          <button key={d} aria-label={["Minimize", "Maximize", "Close"][i]} className="flex w-[46px] justify-center">
            <svg viewBox="0 0 10 10" className="size-2.5" fill="none" stroke="#777"><path d={d} /></svg>
          </button>
        ))}
      </header>
      <nav className="flex h-[17px] shrink-0 items-end gap-[15px] border-b border-[#d4d4d4] pl-[9px]">
        {menus.map(([a, b, c]) => (
          <button key={a + b + c}>{a}<u className="underline-offset-2">{b}</u>{c}</button>
        ))}
      </nav>
      <MainToolbars />
      <main className="flex min-h-0 flex-1">
        <LeftDock />
        <div className="flex w-1.5 shrink-0 items-center justify-center">
          <svg viewBox="0 0 1 17" className="h-[17px] w-px" stroke="#999" strokeDasharray="1 2"><path d="M.5 0v17" /></svg>
        </div>
        <RenderArea />
      </main>
      <footer className="flex h-[25px] shrink-0 items-center justify-end pt-px">
        <button aria-label="Abort" className="mr-[3px] flex size-[18px] items-center justify-center rounded-[3px] border border-[#c4c4c4] bg-[#f6f6f6]">
          <svg viewBox="0 0 8 8" className="size-2" stroke="#8c8c8c" strokeWidth="2.400"><path d="m1 1 6 6m0-6L1 7" /></svg>
        </button>
        <div className="h-5 w-[800px] border border-b-white border-l-[#a0a0a0] border-r-white border-t-[#a0a0a0]" />
        <svg viewBox="0 0 25 20" className="h-5 w-[25px]" fill="#b0b0b0">
          <path d="M12 18h1v1h-1zM15 18h1v1h-1zM18 18h1v1h-1zM21 18h1v1h-1zM15 15h1v1h-1zM18 15h1v1h-1zM21 15h1v1h-1zM18 12h1v1h-1zM21 12h1v1h-1zM21 9h1v1h-1z" />
        </svg>
      </footer>
      <Dialog />
    </div>
  );
}
